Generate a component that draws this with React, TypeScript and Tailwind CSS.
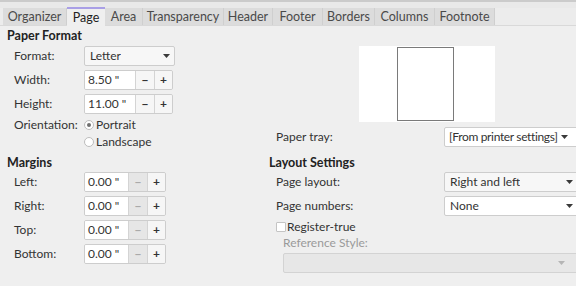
import React from "react";

const tabs = ["Organizer", "Page", "Area", "Transparency", "Header", "Footer", "Borders", "Columns", "Footnote"];
const tabWidths = [64, 38, 38, 81, 49, 50, 52, 60, 60];

function Arrow({ light }: { light?: boolean }) {
  return (
    <svg width="7" height="4" viewBox="0 0 7 4" className="shrink-0">
      <path d="M0 0 L7 0 L3.5 4 Z" fill={light ? "#b5b5b5" : "#3a3a3a"} />
    </svg>
  );
}

function Dropdown({ value, className, white }: { value: string; className: string; white?: boolean }) {
  return (
    <div
      className={`flex items-center justify-between gap-[3px] border border-[#cdcdcd] rounded-[2px] pl-[5px] pr-[4px] ${white ? "bg-white" : "bg-[#f7f7f7]"} ${className}`}
    >
      <span className="whitespace-nowrap overflow-hidden min-w-0">{value}</span>
      <Arrow />
    </div>
  );
}

function Spin({ value, wide, disabledMinus }: { value: string; wide?: boolean; disabledMinus?: boolean }) {
  return (
    <div className="flex h-[20px] border border-[#cdcdcd] rounded-[2px] overflow-hidden">
      <div className={`bg-white flex items-center pl-[3px] ${wide ? "w-[50px]" : "w-[43px]"}`}>{value}</div>
      <div
        className={`w-[19px] flex items-center justify-center border-l border-[#d4d4d4] font-bold ${disabledMinus ? "bg-[#e6e6e6] text-[#aaaaaa]" : "bg-[#f6f6f6]"}`}
      >
        −
      </div>
      <div className="w-[18px] flex items-center justify-center border-l border-[#d4d4d4] bg-[#f6f6f6] font-bold">+</div>
    </div>
  );
}

function Row({ label, children }: { label: string; children: React.ReactNode }) {
  return (
    <div className="flex items-center h-[20px]">
      <span className="w-[70px] pl-[14px] shrink-0 box-content">{label}</span>
      {children}
    </div>
  );
}

export default function App() {
  return (
    <div
      className="w-[576px] h-[286px] overflow-hidden bg-[#efefef] text-[#333] text-[12px] leading-[16px]"
      style={{ fontFamily: 'Lato, "Noto Sans", sans-serif' }}
    >
      {/* window strip */}
      <div className="h-[8px] bg-[#e9e9e9] border-t-2 border-[#cbcbcb]" />

      {/* tab bar */}
      <div className="flex h-[18px] pl-[3px] border-b border-[#d9d9d9] bg-[#ececec] text-[12.5px]">
        {tabs.map((t, i) => (
          <div
            key={t}
            style={{ width: tabWidths[i] }}
            className={
              t === "Page"
                ? "flex items-center justify-center bg-[#efefef] border-t-2 border-[#a99fe6] -mt-[1px] h-[19px] text-[#222]"
                : "flex items-center justify-center bg-[#dcdcdc] border-r border-[#cfcfcf] text-[#4a4a4a]"
            }
          >
            {t}
          </div>
        ))}
      </div>

      {/* upper section */}
      <div className="flex">
        <div className="w-[269px] shrink-0">
          <div className="pl-[7px] pt-[2px] h-[20px] font-bold text-[#222] text-[12.5px]">Paper Format</div>
          <div className="flex flex-col gap-[4px]">
            <Row label="Format:">
              <Dropdown value="Letter" className="w-[91px] h-[20px]" />
            </Row>
            <Row label="Width:">
              <Spin value='8.50 "' wide />
            </Row>
            <Row label="Height:">
              <Spin value='11.00 "' wide />
            </Row>
          </div>
          <div className="flex mt-[2px]">
            <span className="w-[70px] pl-[14px] shrink-0 box-content h-[17px] flex items-center">Orientation:</span>
            <div className="flex flex-col">
              <label className="flex items-center h-[17px] gap-[2px]">
                <span className="w-[10px] h-[10px] rounded-full border border-[#bdbdbd] bg-white flex items-center justify-center">
                  <span className="w-[4px] h-[4px] rounded-full bg-[#707070]" />
                </span>
                Portrait
              </label>
              <label className="flex items-center h-[17px] gap-[2px]">
                <span className="w-[10px] h-[10px] rounded-full border border-[#bdbdbd] bg-white" />
                Landscape
              </label>
            </div>
          </div>
        </div>

        <div className="flex-1">
          <div className="h-[20px]" />
          <div className="ml-[90px] w-[136px] h-[76px] bg-white flex justify-center">
            <div className="ml-[-4px] w-[57px] h-[74px] mt-[1px] border border-[#7a7a7a]" />
          </div>
          <div className="flex items-center mt-[5px] h-[20px]">
            <span className="pl-[7px] w-[175px] shrink-0">Paper tray:</span>
            <Dropdown
              value="[From printer settings]"
              className="w-[134px] h-[20px] shrink-0 !justify-start !pl-[4px] tracking-[-0.35px]"
              white
            />
          </div>
        </div>
      </div>

      {/* lower section */}
      <div className="flex mt-[5px]">
        <div className="w-[269px] shrink-0">
          <div className="pl-[7px] h-[17px] font-bold text-[#222] text-[12.5px]">Margins</div>
          <div className="flex flex-col gap-[4px]">
            {["Left:", "Right:", "Top:", "Bottom:"].map((l) => (
              <Row key={l} label={l}>
                <Spin value='0.00 "' disabledMinus />
              </Row>
            ))}
          </div>
        </div>

        <div className="flex-1">
          <div className="h-[17px] font-bold text-[#222] text-[12.5px]">Layout Settings</div>
          <div className="flex flex-col gap-[4px]">
            <div className="flex items-center h-[20px]">
              <span className="pl-[7px] w-[175px] shrink-0">Page layout:</span>
              <Dropdown value="Right and left" className="w-[134px] h-[20px] shrink-0" />
            </div>
            <div className="flex items-center h-[20px]">
              <span className="pl-[7px] w-[175px] shrink-0">Page numbers:</span>
              <Dropdown value="None" className="w-[134px] h-[20px] shrink-0" white />
            </div>
          </div>
          <label className="flex items-center h-[17px] pl-[7px] mt-[2px] gap-[1px]">
            <span className="w-[10px] h-[10px] border border-[#c4c4c4] bg-white rounded-[1px]" />
            Register-true
          </label>
          <div className="pl-[14px] h-[17px] text-[#9a9a9a]">Reference Style:</div>
          <div className="ml-[14px] mt-[1px] h-[20px] w-[300px] bg-[#e7e7e7] border border-[#d3d3d3] rounded-[2px] flex items-center justify-end pr-[17px]">
            <Arrow light />
          </div>
        </div>
      </div>
    </div>
  );
}
